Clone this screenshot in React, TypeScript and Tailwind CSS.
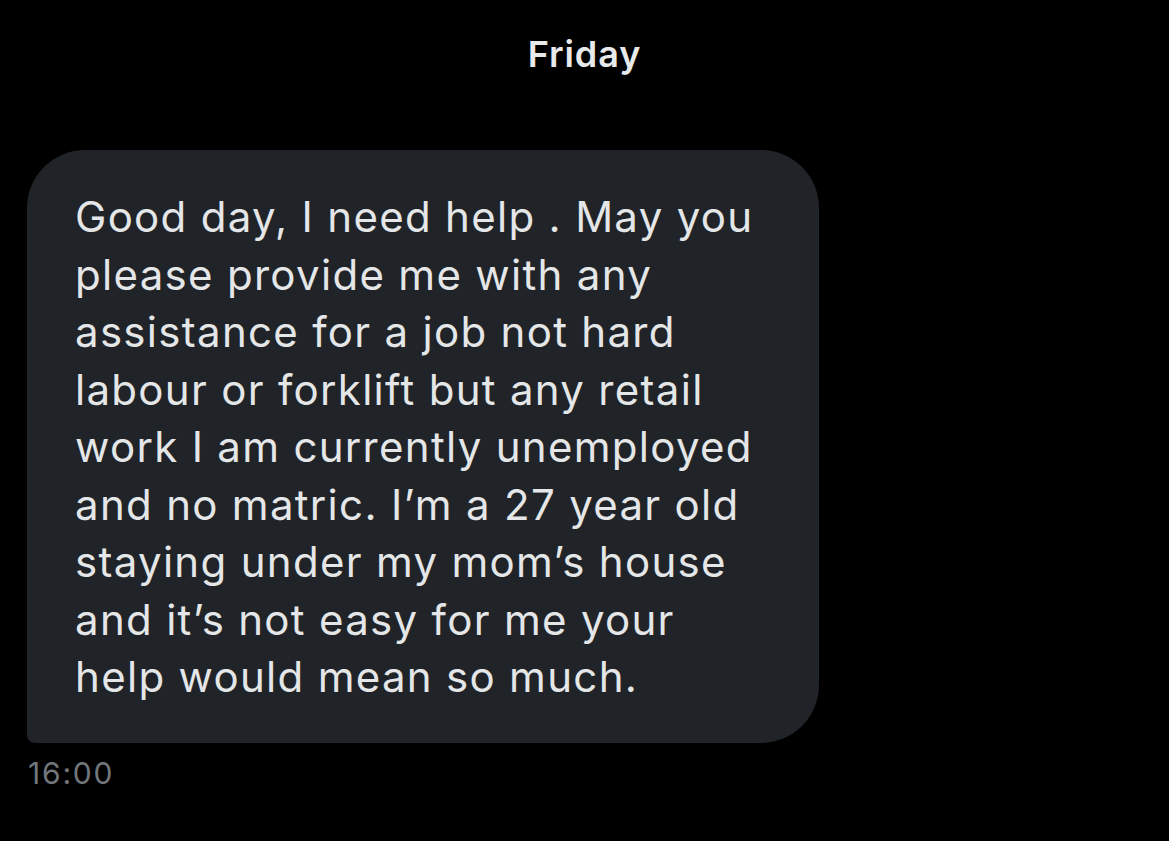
const lines = [
  "Good day, I need help . May you",
  "please provide me with any",
  "assistance for a job not hard",
  "labour or forklift but any retail",
  "work I am currently unemployed",
  "and no matric. I’m a 27 year old",
  "staying under my mom’s house",
  "and it’s not easy for me your",
  "help would mean so much.",
];

export default function App() {
  return (
    <div
      className="w-[1169px] h-[841px] bg-black overflow-hidden"
      style={{ fontFamily: "Inter, 'Noto Sans', sans-serif" }}
    >
      <div className="pt-[32px] flex justify-center">
        <span className="text-[36px] leading-[44px] font-semibold text-[#e7e9ea] tracking-[0.9px]">Friday</span>
      </div>
      <div className="mt-[74px] pl-[27px]">
        <div className="w-[792px] bg-[#202327] rounded-[58px] rounded-bl-[8px] pl-[48px] pr-[30px] pt-[38px] pb-[37px]">
          <p className="text-[42px] leading-[57.5px] text-[#e4e6e7] tracking-[1.3px] whitespace-nowrap">
            {lines.map((l, i) => (
              <span key={i} className="block">{l}</span>
            ))}
          </p>
        </div>
        <div className="mt-[12px] pl-[1px] text-[30px] leading-[36px] text-[#71767b] tracking-[1.8px]">16:00</div>
      </div>
    </div>
  );
}
